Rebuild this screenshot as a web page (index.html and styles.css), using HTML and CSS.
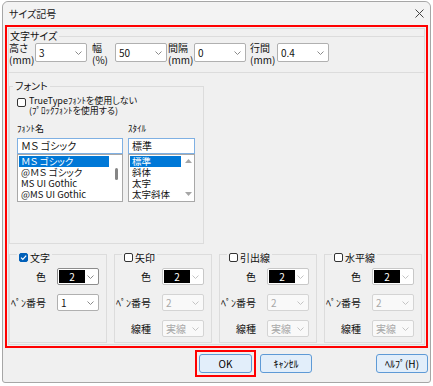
FILE: index.html
```html
<!DOCTYPE html>
<html lang="ja">
<head>
    <meta charset="UTF-8">
    <meta name="viewport" content="width=device-width, initial-scale=1.0">
    <title>サイズ記号</title>
    <link rel="stylesheet" href="styles.css">
</head>
<body>
    <div class="window">
        <div class="titlebar">
            <span class="title">サイズ記号</span>
            <svg class="close" width="9" height="9" viewBox="0 0 9 9"><path d="M0.5 0.5 L8.5 8.5 M8.5 0.5 L0.5 8.5" stroke="#444" stroke-width="1" fill="none"/></svg>
        </div>

        <div class="mark">
            <div class="panel">
                <!-- 文字サイズ -->
                <fieldset class="size-grp">
                    <legend>文字サイズ</legend>
                    <div class="size-row">
                        <div class="size-lbl l1">高さ<br>(mm)</div>
                        <div class="combo big"><span>3</span><svg class="chev" width="7" height="4" viewBox="0 0 7 4"><path d="M0.5 0.5 L3.5 3.5 L6.5 0.5"/></svg></div>
                        <div class="size-lbl l2">幅<br>(%)</div>
                        <div class="combo big"><span>50</span><svg class="chev" width="7" height="4" viewBox="0 0 7 4"><path d="M0.5 0.5 L3.5 3.5 L6.5 0.5"/></svg></div>
                        <div class="size-lbl l3">間隔<br>(mm)</div>
                        <div class="combo big"><span>0</span><svg class="chev" width="7" height="4" viewBox="0 0 7 4"><path d="M0.5 0.5 L3.5 3.5 L6.5 0.5"/></svg></div>
                        <div class="size-lbl l4">行間<br>(mm)</div>
                        <div class="combo big"><span>0.4</span><svg class="chev" width="7" height="4" viewBox="0 0 7 4"><path d="M0.5 0.5 L3.5 3.5 L6.5 0.5"/></svg></div>
                    </div>
                </fieldset>

                <!-- フォント -->
                <fieldset class="font-grp">
                    <legend>フォント</legend>
                    <div class="check-row">
                        <span class="cb"></span>
                        <span class="cb-text">TrueTypeﾌｫﾝﾄを使用しない<br>(ﾌﾟﾛｯｸﾌｫﾝﾄを使用する)</span>
                    </div>
                    <div class="font-cols">
                        <div class="name-col">
                            <div class="cap">ﾌｫﾝﾄ名</div>
                            <div class="edit">ＭＳ ゴシック</div>
                            <div class="list">
                                <div class="items">
                                    <div class="item sel">ＭＳ ゴシック</div>
                                    <div class="item">@ＭＳ ゴシック</div>
                                    <div class="item">MS UI Gothic</div>
                                    <div class="item">@MS UI Gothic</div>
                                </div>
                                <div class="sbar"><span class="thumb"></span></div>
                            </div>
                        </div>
                        <div class="style-col">
                            <div class="cap">ｽﾀｲﾙ</div>
                            <div class="edit">標準</div>
                            <div class="list">
                                <div class="items">
                                    <div class="item sel">標準</div>
                                    <div class="item">斜体</div>
                                    <div class="item">太字</div>
                                    <div class="item">太字斜体</div>
                                </div>
                                <div class="sbar arrows">
                                    <svg width="7" height="4" viewBox="0 0 7 4"><path d="M0 4 L3.5 0 L7 4 Z"/></svg>
                                    <svg width="7" height="4" viewBox="0 0 7 4"><path d="M0 0 L3.5 4 L7 0 Z"/></svg>
                                </div>
                            </div>
                        </div>
                    </div>
                </fieldset>

                <!-- ペン設定 -->
                <div class="pens">
                    <fieldset class="pen">
                        <legend><span class="cb on"><svg width="9" height="9" viewBox="0 0 9 9"><path d="M2 4.6 L3.8 6.4 L7.2 2.6"/></svg></span>文字</legend>
                        <div class="pen-row"><span class="pen-lbl">色</span><div class="combo color"><span class="swatch">2</span><svg class="chev" width="7" height="4" viewBox="0 0 7 4"><path d="M0.5 0.5 L3.5 3.5 L6.5 0.5"/></svg></div></div>
                        <div class="pen-row"><span class="pen-lbl">ﾍﾟﾝ番号</span><div class="combo"><span>1</span><svg class="chev" width="7" height="4" viewBox="0 0 7 4"><path d="M0.5 0.5 L3.5 3.5 L6.5 0.5"/></svg></div></div>
                    </fieldset>
                    <fieldset class="pen">
                        <legend><span class="cb"></span>矢印</legend>
                        <div class="pen-row"><span class="pen-lbl">色</span><div class="combo color off"><span class="swatch">2</span><svg class="chev" width="7" height="4" viewBox="0 0 7 4"><path d="M0.5 0.5 L3.5 3.5 L6.5 0.5"/></svg></div></div>
                        <div class="pen-row"><span class="pen-lbl">ﾍﾟﾝ番号</span><div class="combo off"><span>2</span><svg class="chev" width="7" height="4" viewBox="0 0 7 4"><path d="M0.5 0.5 L3.5 3.5 L6.5 0.5"/></svg></div></div>
                        <div class="pen-row"><span class="pen-lbl">線種</span><div class="combo off"><span>実線</span><svg class="chev" width="7" height="4" viewBox="0 0 7 4"><path d="M0.5 0.5 L3.5 3.5 L6.5 0.5"/></svg></div></div>
                    </fieldset>
                    <fieldset class="pen">
                        <legend><span class="cb"></span>引出線</legend>
                        <div class="pen-row"><span class="pen-lbl">色</span><div class="combo color off"><span class="swatch">2</span><svg class="chev" width="7" height="4" viewBox="0 0 7 4"><path d="M0.5 0.5 L3.5 3.5 L6.5 0.5"/></svg></div></div>
                        <div class="pen-row"><span class="pen-lbl">ﾍﾟﾝ番号</span><div class="combo off"><span>2</span><svg class="chev" width="7" height="4" viewBox="0 0 7 4"><path d="M0.5 0.5 L3.5 3.5 L6.5 0.5"/></svg></div></div>
                        <div class="pen-row"><span class="pen-lbl">線種</span><div class="combo off"><span>実線</span><svg class="chev" width="7" height="4" viewBox="0 0 7 4"><path d="M0.5 0.5 L3.5 3.5 L6.5 0.5"/></svg></div></div>
                    </fieldset>
                    <fieldset class="pen">
                        <legend><span class="cb"></span>水平線</legend>
                        <div class="pen-row"><span class="pen-lbl">色</span><div class="combo color off"><span class="swatch">2</span><svg class="chev" width="7" height="4" viewBox="0 0 7 4"><path d="M0.5 0.5 L3.5 3.5 L6.5 0.5"/></svg></div></div>
                        <div class="pen-row"><span class="pen-lbl">ﾍﾟﾝ番号</span><div class="combo off"><span>2</span><svg class="chev" width="7" height="4" viewBox="0 0 7 4"><path d="M0.5 0.5 L3.5 3.5 L6.5 0.5"/></svg></div></div>
                        <div class="pen-row"><span class="pen-lbl">線種</span><div class="combo off"><span>実線</span><svg class="chev" width="7" height="4" viewBox="0 0 7 4"><path d="M0.5 0.5 L3.5 3.5 L6.5 0.5"/></svg></div></div>
                    </fieldset>
                </div>
            </div>
        </div>

        <div class="buttons">
            <div class="ok-mark"><button class="btn">OK</button></div>
            <button class="btn cancel">ｷｬﾝｾﾙ</button>
            <button class="btn help">ﾍﾙﾌﾟ(H)</button>
        </div>
    </div>
</body>
</html>
```

FILE: styles.css
```css
body {
    margin: 0;
    background: #fff;
    font-family: "Noto Sans CJK JP", "Noto Sans", sans-serif;
    font-size: 10px;
    color: #111;
    font-feature-settings: "palt";
}
.window {
    margin: 1px 2px 0 2px;
    width: 429px;
    height: 382px;
    box-sizing: border-box;
    border: 1px solid #a6a6a6;
    border-radius: 6px 6px 3px 3px;
    background: #f0f0f0;
}
.titlebar {
    height: 23px;
    display: flex;
    align-items: center;
    justify-content: space-between;
    padding: 0 6px 0 6px;
    background: #f3f3f3;
    border-radius: 6px 6px 0 0;
}
.title {
    font-size: 10px;
    color: #1a1a1a;
}
.mark {
    margin-left: 2px;
    width: 423px;
    height: 323px;
    box-sizing: border-box;
    border: 2px solid #f00;
    padding: 1px;
}
.panel {
    height: 100%;
    box-sizing: border-box;
    border: 1px solid #dcdcdc;
    padding-top: 1px;
}

/* 文字サイズ */
.size-grp {
    margin: 0;
    padding: 0 0 6px 0;
    border: 0;
    border-top: 1px solid #dcdcdc;
    border-bottom: 1px solid #dcdcdc;
}
.size-grp legend {
    padding: 0 2px 0 1px;
    line-height: 12px;
}
.size-row {
    display: flex;
    align-items: flex-start;
}
.size-lbl {
    line-height: 12px;
    white-space: nowrap;
}
.l1 { width: 26px; }
.l2 { width: 23px; margin-left: 5px; }
.l3 { width: 26px; margin-left: 1px; }
.l4 { width: 27px; margin-left: 4px; }

.combo {
    display: flex;
    align-items: center;
    justify-content: space-between;
    width: 42px;
    height: 17px;
    box-sizing: border-box;
    border: 1px solid #b0b0b0;
    border-radius: 2px;
    background: #fff;
    padding: 0 4px 0 3px;
}
.combo.big {
    width: 52px;
    height: 19px;
    margin-top: 1px;
}
.chev path {
    fill: none;
    stroke: #8a8a8a;
    stroke-width: 1;
}
.combo.off {
    border-color: #d4d4d4;
    background: #f9f9f9;
    color: #a8a8a8;
}
.combo.off .chev path {
    stroke: #c4c4c4;
}
.combo.color {
    padding: 1px 4px 1px 1px;
    border-color: #8c8c8c;
}
.combo.color.off {
    border-color: #c8c8c8;
    background: #fff;
}
.swatch {
    width: 26px;
    height: 13px;
    background: #000;
    color: #fff;
    text-align: center;
    line-height: 13px;
}

/* フォント */
.font-grp {
    margin: 7px 0 0 0;
    width: 195px;
    box-sizing: border-box;
    padding: 0 0 41px 7px;
    border: 1px solid #dcdcdc;
}
.font-grp legend {
    margin-left: -4px;
    padding: 0 2px;
    line-height: 12px;
}
.check-row {
    display: flex;
    align-items: flex-start;
    gap: 3px;
    margin-top: 4px;
}
.check-row .cb {
    margin-top: 2px;
}
.cb-text {
    font-size: 9px;
    line-height: 10px;
}
.cb {
    display: inline-flex;
    width: 9px;
    height: 9px;
    flex: none;
    box-sizing: border-box;
    border: 1px solid #333;
    border-radius: 2px;
    background: #fff;
}
.cb.on {
    border-color: #005fb8;
    background: #005fb8;
}
.cb.on svg {
    margin: -1px;
}
.cb.on path {
    fill: none;
    stroke: #fff;
    stroke-width: 1.2;
}
.font-cols {
    display: flex;
    gap: 5px;
}
.name-col { width: 106px; }
.style-col { width: 67px; }
.cap {
    margin-top: 7px;
    font-size: 9px;
    line-height: 11px;
}
.edit {
    margin-top: 4px;
    height: 16px;
    box-sizing: border-box;
    border: 1px solid #7fb0e3;
    background: #fff;
    padding-left: 3px;
    line-height: 14px;
    white-space: nowrap;
}
.list {
    display: flex;
    height: 48px;
    box-sizing: border-box;
    border: 1px solid #a8a8a8;
    background: #fff;
}
.items {
    flex: 1;
    padding: 1px;
}
.item {
    height: 11px;
    line-height: 11px;
    font-size: 9.5px;
    padding-left: 2px;
    white-space: nowrap;
}
.item.sel {
    background: #0078d7;
    color: #fff;
}
.sbar {
    width: 12px;
    display: flex;
    flex-direction: column;
    align-items: center;
    padding-top: 13px;
}
.thumb {
    width: 3px;
    height: 12px;
    background: #858585;
    border-radius: 2px;
}
.sbar.arrows {
    justify-content: space-between;
    padding: 4px 0 5px;
}
.sbar.arrows path {
    fill: #a6a6a6;
}

/* ペン設定 */
.pens {
    display: flex;
    gap: 7px;
    margin-top: 2px;
}
.pen {
    margin: 0;
    width: 98px;
    box-sizing: border-box;
    padding: 0 0 5px 0;
    border: 1px solid #dcdcdc;
}
.pen legend {
    display: flex;
    align-items: center;
    gap: 2px;
    margin-left: 7px;
    padding: 7px 2px 0;
    line-height: 9px;
}
.pen-row {
    display: flex;
    align-items: center;
    gap: 11px;
    margin-top: 9px;
}
.pen-row:first-of-type {
    margin-top: 6px;
}
.pen-lbl {
    width: 36px;
    flex: none;
    display: flex;
    justify-content: flex-end;
    white-space: nowrap;
}

/* ボタン */
.buttons {
    display: flex;
    align-items: center;
    padding-left: 192px;
    margin-top: 2px;
}
.ok-mark {
    border: 2px solid #f00;
    padding: 2px;
    display: flex;
}
.btn {
    width: 53px;
    height: 19px;
    box-sizing: border-box;
    border: 1px solid #5e9ad6;
    border-radius: 3px;
    background: #e2eefa;
    font-family: inherit;
    font-size: 10px;
    color: #000;
    padding: 0;
}
.cancel {
    width: 52px;
    margin-left: 4px;
}
.help {
    width: 52px;
    margin-left: 64px;
}
```
